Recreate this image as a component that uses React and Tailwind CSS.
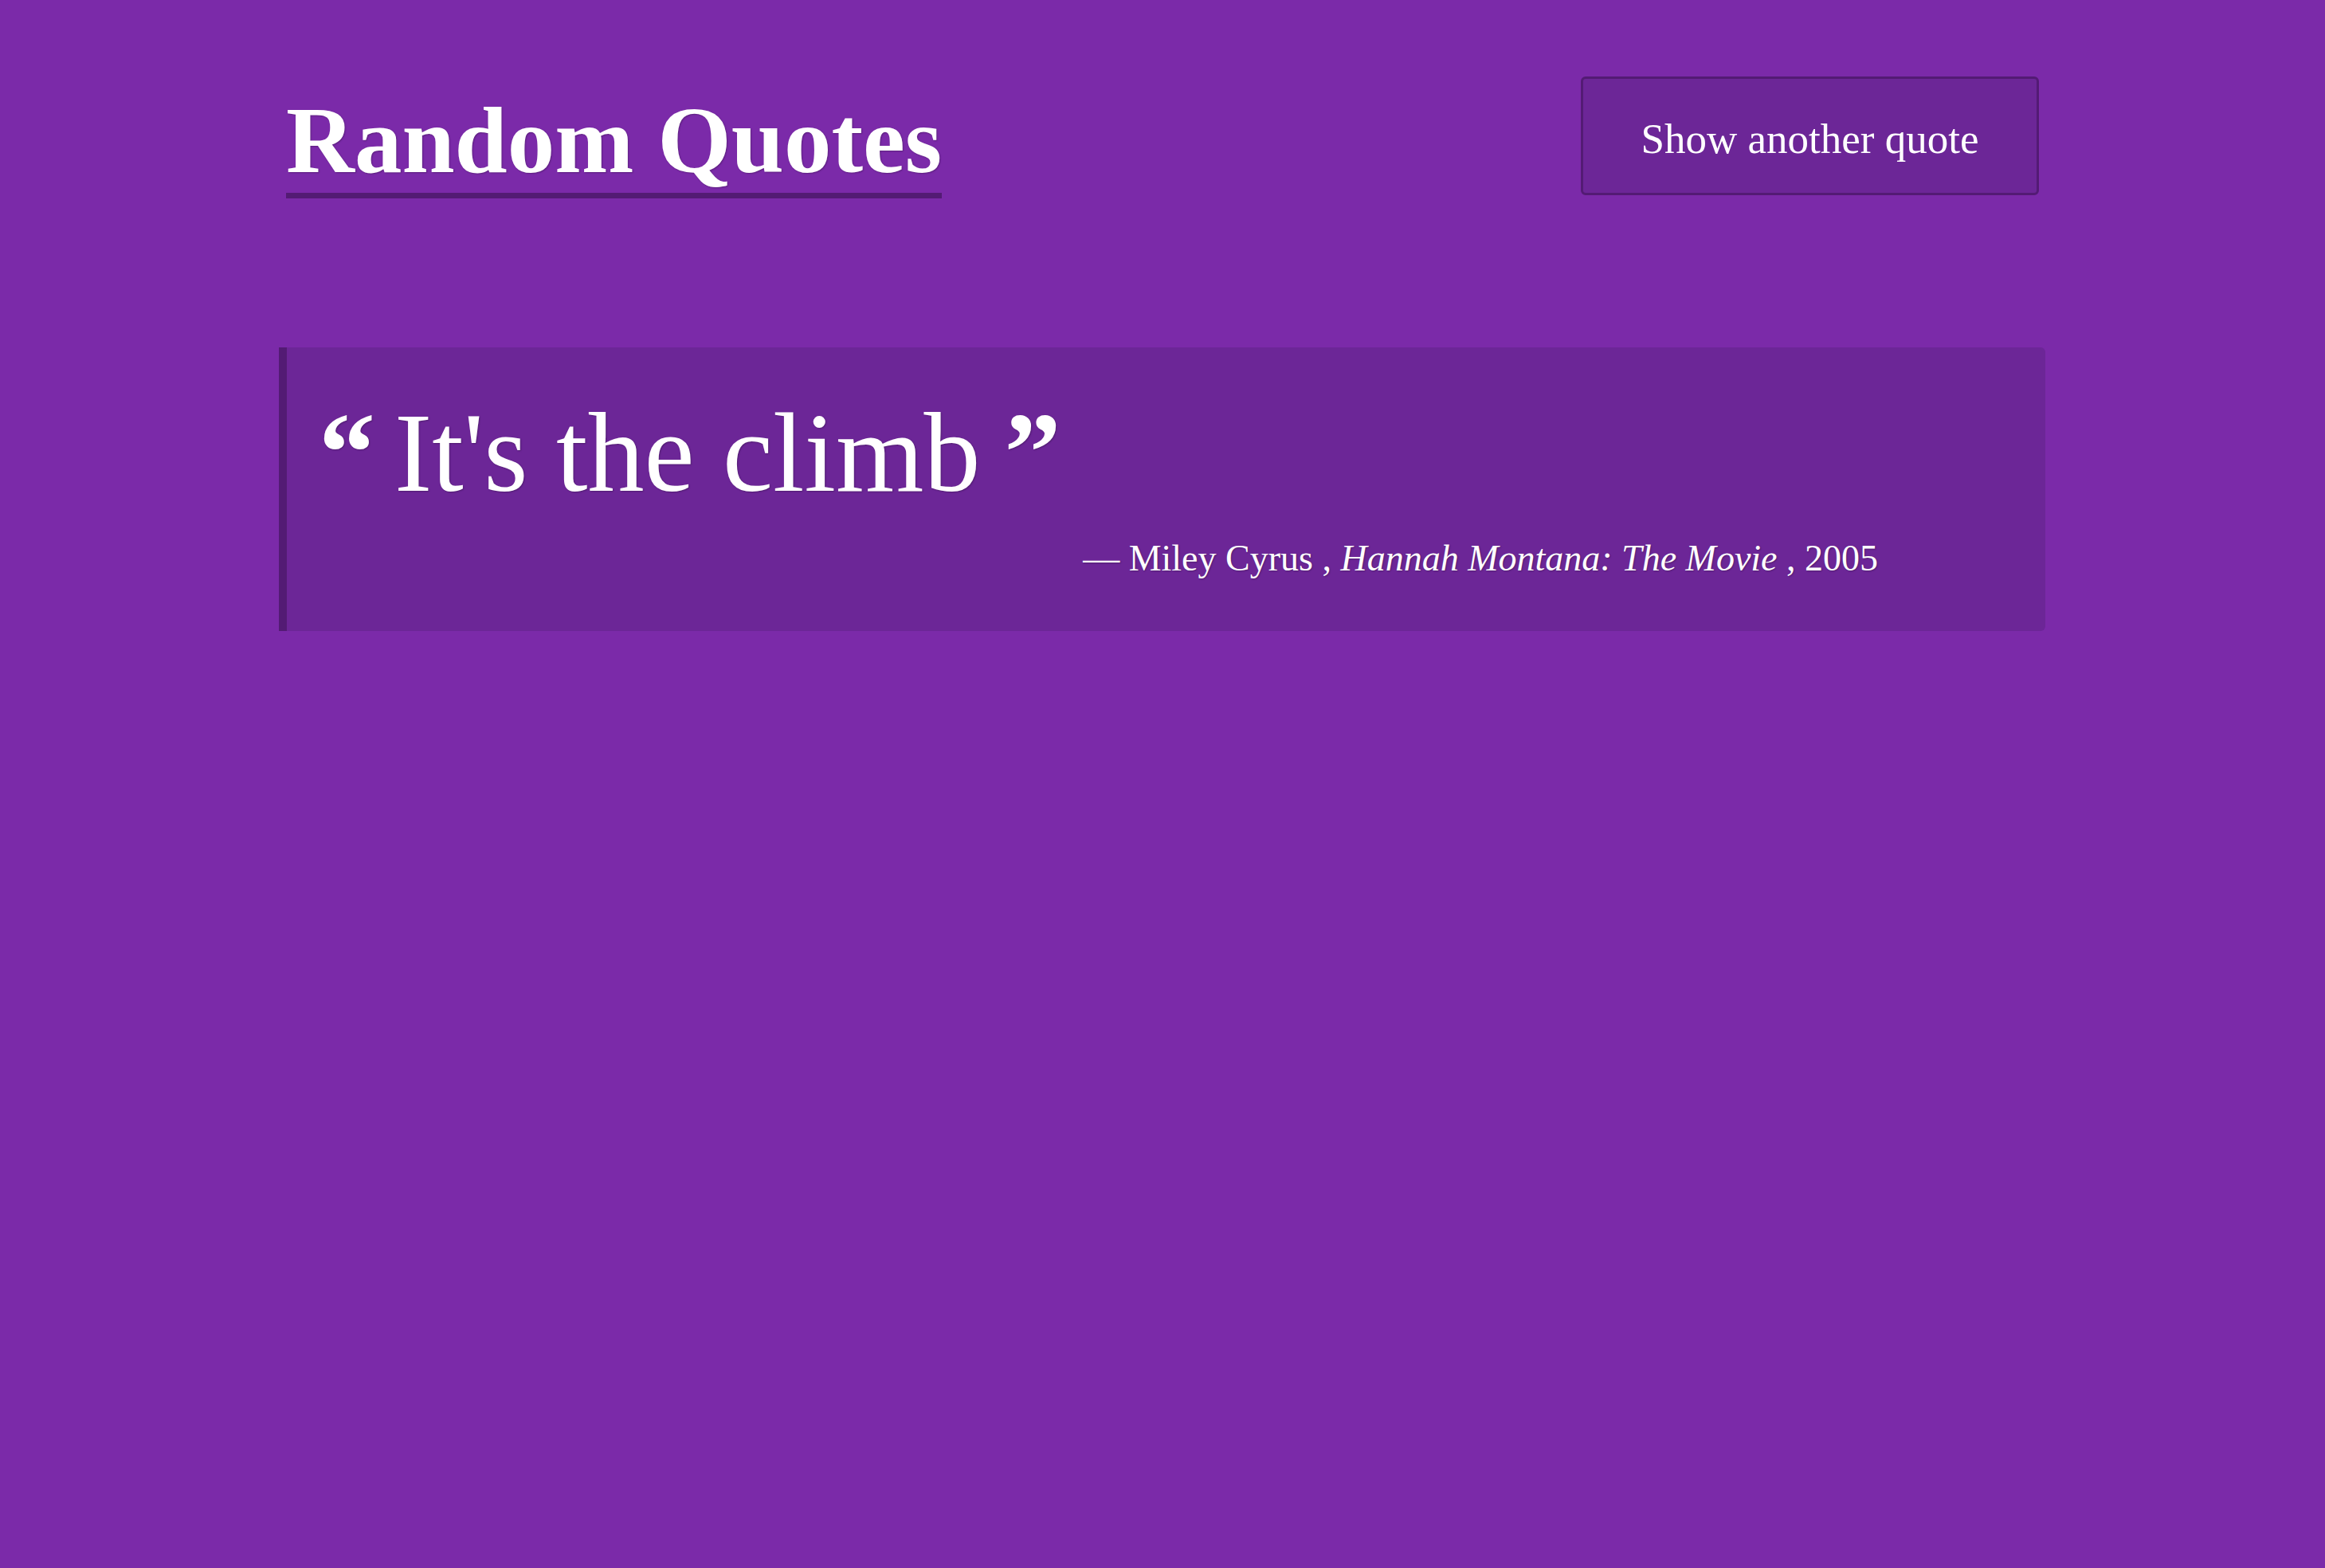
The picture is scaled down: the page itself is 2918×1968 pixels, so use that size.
export default function App() {
  return (
    <div className="min-h-screen w-full bg-[#7b2aa9] text-white font-['Liberation_Serif',serif] [text-shadow:1px_1px_2px_rgba(0,0,0,0.25)]">
      <div className="w-[2200px] mx-auto">
        <header className="flex justify-between items-start">
          <h1 className="mt-[117px] inline-block text-[119px] leading-none font-bold pb-[6px] border-b-[7px] border-[#531b74]">
            Random Quotes
          </h1>
          <button className="mt-[96px] w-[575px] h-[149px] bg-[#6c2697] border-[3px] border-[#531b74] rounded-[6px] text-[53px] leading-none text-white flex items-center justify-center pt-[8px]">
            Show another quote
          </button>
        </header>
        <blockquote className="mt-[187px] -ml-[9px] w-[2217px] bg-[#6c2697] border-l-[10px] border-[#531b74] rounded-r-[6px] pt-[61px] pb-[68px] pl-[40px]">
          <p className="text-[142px] leading-none">
            <span className="font-bold mr-[24px]">“</span>It's the climb<span className="font-bold ml-[30px]">”</span>
          </p>
          <footer className="mt-[39px] text-[46px] leading-none text-right pr-[210px]">
            — Miley Cyrus , <cite className="italic">Hannah Montana: The Movie</cite> , 2005
          </footer>
        </blockquote>
      </div>
    </div>
  );
}
